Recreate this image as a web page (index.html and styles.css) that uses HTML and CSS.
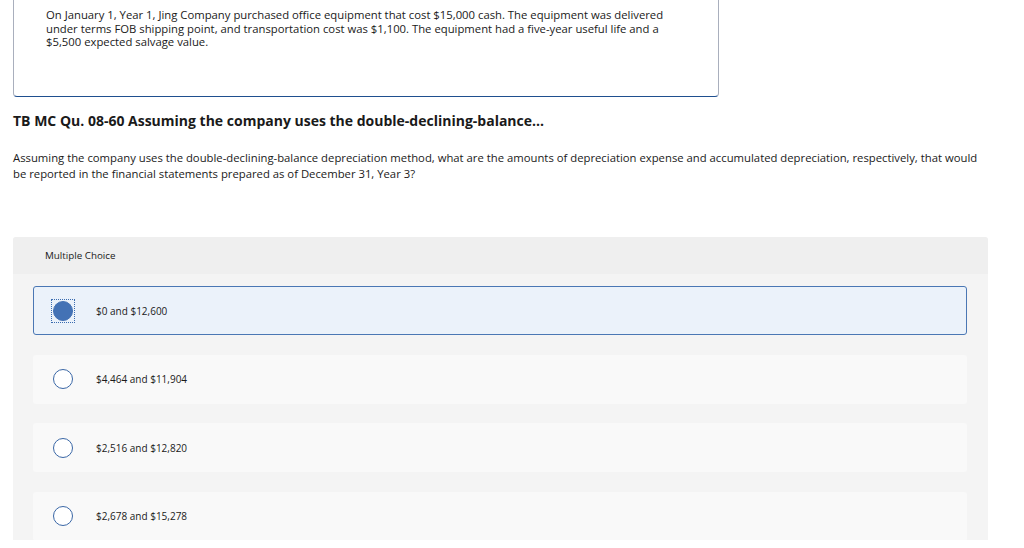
FILE: index.html
```html
<!DOCTYPE html>
<html>
<head>
<meta charset="utf-8">
<link rel="stylesheet" href="styles.css">
</head>
<body>
<div class="page">
  <div class="scenario">
    <p>On January 1, Year 1, Jing Company purchased office equipment that cost $15,000 cash. The equipment was delivered under terms FOB shipping point, and transportation cost was $1,100. The equipment had a five-year useful life and a $5,500 expected salvage value.</p>
  </div>
  <h2 class="title">TB MC Qu. 08-60 Assuming the company uses the double-declining-balance...</h2>
  <p class="question">Assuming the company uses the double-declining-balance depreciation method, what are the amounts of depreciation expense and accumulated depreciation, respectively, that would be reported in the financial statements prepared as of December 31, Year 3?</p>
  <div class="mc">
    <div class="mc-head">Multiple Choice</div>
    <div class="mc-body">
      <div class="opt selected"><span class="radio-wrap"><span class="radio"></span></span><span class="label">$0 and $12,600</span></div>
      <div class="opt"><span class="radio-wrap"><span class="radio"></span></span><span class="label">$4,464 and $11,904</span></div>
      <div class="opt"><span class="radio-wrap"><span class="radio"></span></span><span class="label">$2,516 and $12,820</span></div>
      <div class="opt"><span class="radio-wrap"><span class="radio"></span></span><span class="label">$2,678 and $15,278</span></div>
    </div>
  </div>
</div>
</body>
</html>
```
FILE: styles.css
```css
html, body { margin: 0; padding: 0; background: #fff; }
body { font-family: "Open Sans", Arial, sans-serif; color: #1a1a1a; }
.page { padding-left: 13px; width: 976px; }
.scenario {
  width: 672px; height: 88px;
  border: 1px solid #a9afbd; border-top: none;
  border-bottom: 1px solid #1f4f8f;
  border-radius: 0 0 4px 4px;
  padding: 8px 0 0 32px;
  box-sizing: content-box;
}
.scenario p { margin: 0; font-size: 11.3px; line-height: 13.5px; width: 640px; }
.title { margin: 15px 0 0; font-size: 14px; font-weight: 700; line-height: 18px; color: #1a1a1a; }
.question { margin: 20px 0 0; font-size: 11.3px; line-height: 16px; width: 975px; }
.mc { margin-top: 55px; width: 975px; height: 303px; overflow: hidden; background: #f4f4f4; border-radius: 3px 3px 0 0; }
.mc-head { background: #efefef; height: 37px; display: flex; align-items: center; padding-left: 32px; font-size: 9.8px; }
.mc-body { padding: 12px 21px 0 20px; display: flex; flex-direction: column; gap: 19.6px; }
.opt { flex: none; height: 49px; background: #f9f9f9; border-radius: 3px; display: flex; align-items: center; box-sizing: border-box; border: 1px solid transparent; }
.opt.selected { background: #ebf2fa; border-color: #4a77b4; }
.radio-wrap { width: 24px; height: 24px; margin-left: 17px; display: flex; align-items: center; justify-content: center; box-sizing: border-box; border: 1px dotted transparent; }
.radio { width: 20px; height: 20px; border-radius: 50%; border: 1px solid #3a67a6; box-sizing: border-box; background: #fff; }
.selected .radio-wrap { border-color: #3a6cb0; }
.selected .radio { background: #4372b5; border-color: #4372b5; }
.label { margin-left: 21px; font-size: 10px; color: #1a1a1a; }
```
